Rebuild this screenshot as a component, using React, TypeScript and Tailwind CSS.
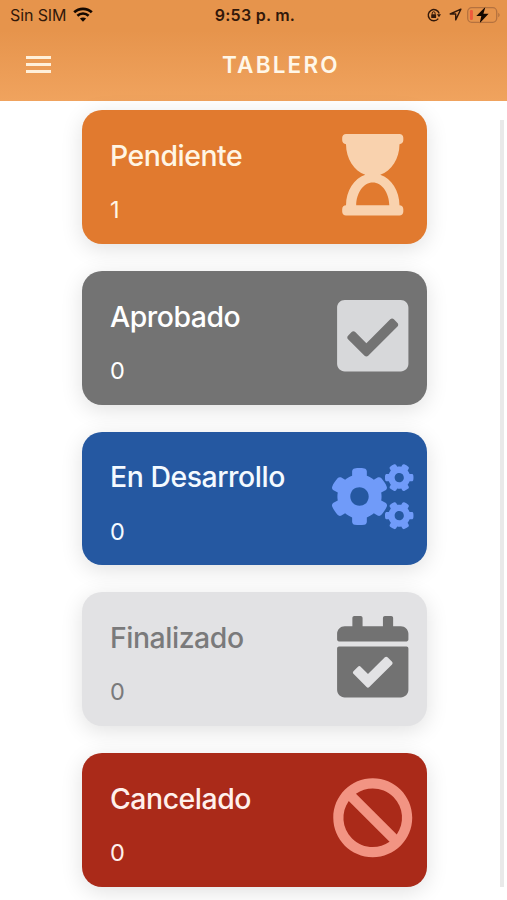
import type { IconType } from "react-icons";
import { FaBan, FaCalendarCheck, FaCheckSquare, FaCogs, FaHourglassStart } from "react-icons/fa";

type StatusCardProps = {
  title: string;
  count: number;
  icon: IconType;
  cardClass: string;
  iconClass: string;
};

const CARDS: StatusCardProps[] = [
  {
    title: "Pendiente",
    count: 1,
    icon: FaHourglassStart,
    cardClass: "bg-[#e17a2f] text-[#fff5e4]",
    iconClass: "text-[#f9d2ae]",
  },
  {
    title: "Aprobado",
    count: 0,
    icon: FaCheckSquare,
    cardClass: "bg-[#737373] text-white",
    iconClass: "text-[#d7d8da]",
  },
  {
    title: "En Desarrollo",
    count: 0,
    icon: FaCogs,
    cardClass: "bg-[#2558a1] text-[#f4faff]",
    iconClass: "text-[#709bf9]",
  },
  {
    title: "Finalizado",
    count: 0,
    icon: FaCalendarCheck,
    cardClass: "bg-[#e2e2e4] text-[#7a7a7b]",
    iconClass: "text-[#727272]",
  },
  {
    title: "Cancelado",
    count: 0,
    icon: FaBan,
    cardClass: "bg-[#aa2a19] text-[#fff0ec]",
    iconClass: "text-[#f29483]",
  },
];

function StatusCard({ title, count, icon: Icon, cardClass, iconClass }: StatusCardProps) {
  return (
    <div
      className={`flex h-[133.5px] w-[344.5px] shrink-0 justify-between rounded-[20px] pl-7 pr-[13px] shadow-[0_5px_22px_rgba(0,0,0,0.12)] ${cardClass}`}
    >
      <div className="flex flex-col pt-[28.5px]">
        <h2 className="whitespace-nowrap text-[28.4px] font-medium leading-[34px] tracking-[-0.45px]">{title}</h2>
        <p className="mt-[22.5px] text-[23.5px] leading-[30px]">{count}</p>
      </div>
      <Icon className={`mt-[24px] size-[81.5px] shrink-0 ${iconClass}`} />
    </div>
  );
}

function WifiIcon() {
  return (
    <svg viewBox="0 0 20 15" className="h-[15px] w-5" fill="none">
      <path d="M1.2 5.3C6 .7 14 .7 18.8 5.3" stroke="currentColor" strokeWidth="2.7" />
      <path d="M4.4 8.7C7.5 5.8 12.5 5.8 15.6 8.7" stroke="currentColor" strokeWidth="2.6" />
      <path d="M10 14.7 6.9 11.6C8.6 10 11.4 10 13.1 11.6Z" fill="currentColor" />
    </svg>
  );
}

function RotationLockIcon() {
  return (
    <svg viewBox="0 0 14 14" className="size-[14px]" fill="none" stroke="currentColor">
      <path d="M11.3 10.6A5.6 5.6 0 1 1 12.2 5.5" strokeWidth="1.4" />
      <path d="M9.9 6.3H14L12 9.2Z" fill="currentColor" stroke="none" />
      <rect x="4.2" y="6.2" width="4.9" height="3.8" rx=".6" fill="currentColor" stroke="none" />
      <path d="M5.2 6.5V5.2a1.45 1.45 0 0 1 2.9 0v1.3" strokeWidth="1" />
    </svg>
  );
}

function LocationIcon() {
  return (
    <svg viewBox="0 0 13 13" className="size-[13px]" fill="none" stroke="currentColor">
      <path d="M11.9 1.1 1.2 6H6.7V11.9Z" strokeWidth="1.4" strokeLinejoin="round" />
    </svg>
  );
}

function BatteryIcon() {
  return (
    <svg viewBox="0 0 33 18" className="h-[18px] w-[33px]" fill="none">
      <rect x=".7" y="1.7" width="29" height="14.6" rx="4" stroke="#b5723f" strokeWidth="1.3" />
      <path d="M31.2 6.8c1.9.8 1.9 3.6 0 4.4Z" fill="#b5723f" />
      <rect x="2.9" y="4" width="3" height="10" rx="1.2" fill="#ef5a3c" />
      <path
        d="M18.5.8 9.3 10H14.3L12.7 17.2 21.6 7.7H16.4Z"
        fill="#140800"
        stroke="#e8954f"
        strokeWidth=".8"
        paintOrder="stroke"
      />
    </svg>
  );
}

function StatusBar() {
  return (
    <div className="grid h-[29px] grid-cols-3 items-center pl-[10px] pr-[7px] text-[#32180a]">
      <div className="flex items-center gap-[7px]">
        <span className="text-[16px] leading-5 tracking-[-0.1px]">Sin SIM</span>
        <span className="text-[#140800]">
          <WifiIcon />
        </span>
      </div>
      <span className="text-center text-[16px] font-semibold leading-5 tracking-[0.25px]">9:53 p. m.</span>
      <div className="flex items-center justify-end">
        <RotationLockIcon />
        <span className="ml-[8px] mr-[5px]">
          <LocationIcon />
        </span>
        <BatteryIcon />
      </div>
    </div>
  );
}

export default function App() {
  return (
    <div className="flex h-[900px] w-[507px] flex-col overflow-hidden bg-white font-['Inter',sans-serif]">
      <header className="h-[101px] shrink-0 bg-linear-to-b from-[#e6944c] from-30% to-[#f0a35e]">
        <StatusBar />
        <div className="flex h-[71px] items-center pl-[26px]">
          <button className="flex w-[25px] flex-col gap-[4px]" aria-label="Menú">
            <span className="h-[3px] w-full bg-[#fff0da]" />
            <span className="h-[3px] w-full bg-[#fff0da]" />
            <span className="h-[3px] w-full bg-[#fff0da]" />
          </button>
          <h1 className="ml-[171px] text-[22.5px] font-semibold leading-7 tracking-[2.2px] text-[#fff7e8]">TABLERO</h1>
        </div>
      </header>

      <main className="flex min-h-0 grow justify-between pl-[82px] pr-[3px]">
        <div className="flex flex-col gap-[27.2px] pt-[9.4px]">
          {CARDS.map((card) => (
            <StatusCard key={card.title} {...card} />
          ))}
        </div>
        {/* Scrollbar */}
        <div className="mt-[19px] h-[767px] w-[4px] bg-[#e9e9e9]" />
      </main>
    </div>
  );
}
